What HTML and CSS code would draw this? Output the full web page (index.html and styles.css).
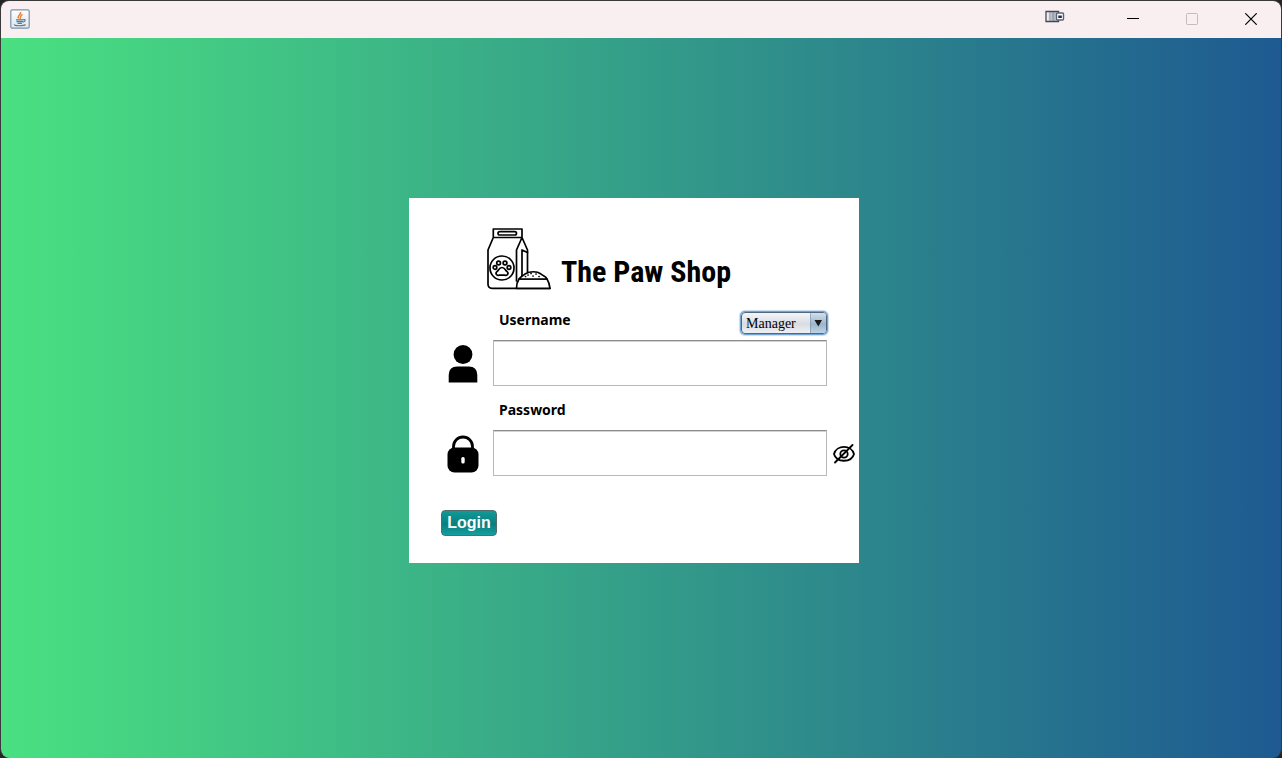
FILE: index.html
```html
<!DOCTYPE html>
<html lang="en">
<head>
<meta charset="utf-8">
<title>The Paw Shop</title>
<link rel="stylesheet" href="styles.css">
</head>
<body>
<div class="window">
  <header class="titlebar">
    <svg class="app-icon" width="20" height="20" viewBox="0 0 20 20" aria-hidden="true">
      <defs><linearGradient id="tile" x2="0" y2="1"><stop stop-color="#fff"/><stop offset="1" stop-color="#dde5ec"/></linearGradient></defs>
      <rect x=".8" y=".8" width="18.4" height="18.4" rx="1.5" fill="url(#tile)" stroke="#7c93a8" stroke-width="1.2"/>
      <path d="M10.5 3C11.5 5 7 6.200 8.500 9.500M12.500 5.500C9.500 6.500 11.500 8 10 10" fill="none" stroke="#e8853a" stroke-width="1.500"/>
      <path d="M6 10.800h7.500M6.500 12.600h6.500M7.500 14.300h4.500M13.500 10.500c2.500-.3 2 2-.4 2.600M4.500 15.300c-1.500 2 9.500 1.800 11 .2" fill="none" stroke="#577b9c" stroke-width="1.200"/>
    </svg>
    <div class="controls">
      <svg class="dock" width="20" height="14" viewBox="0 0 20 14" aria-hidden="true">
        <defs><linearGradient id="dock"><stop stop-color="#fff"/><stop offset=".6" stop-color="#a9adb6"/><stop offset="1" stop-color="#e8e9ed"/></linearGradient></defs>
        <path d="M1 2.500h12.500v10H1z" fill="url(#dock)" stroke="#41475a" stroke-width="1.300"/>
        <path d="M5 3v9M8 3v9" stroke="#8f94a1"/>
        <rect x="11.500" y="4" width="7" height="7" rx="1" fill="#fff" stroke="#596278" stroke-width="1.400"/>
        <path d="M13.300 6.500h3.500v2.500h-3.500z" fill="#252b3d"/>
      </svg>
      <button class="win-btn" aria-label="Minimize"><svg width="12" height="12" viewBox="0 0 12 12"><path d="M0 5.500h12" stroke="#000"/></svg></button>
      <button class="win-btn" aria-label="Maximize" disabled><svg width="12" height="12" viewBox="0 0 12 12"><rect x=".5" y=".5" width="11" height="11" rx="1" fill="none" stroke="#c3bcbd"/></svg></button>
      <button class="win-btn" aria-label="Close"><svg width="12" height="12" viewBox="0 0 12 12"><path d="M.3.300l11.400 11.400M11.700.300L.300 11.700" stroke="#000" stroke-width="1.200"/></svg></button>
    </div>
  </header>
  <main class="content">
    <form class="card">
      <div class="brand">
        <svg width="66" height="62" viewBox="0 0 66 62" fill="none" stroke="#000" stroke-width="1.700" stroke-linejoin="round" stroke-linecap="round" aria-hidden="true">
          <path d="M6.300 9.500V1h28.700v8.500zM6.300 9.500L1 22v34q0 4.300 4 4.300H63M35 9.500L40.500 22v25M35 9.500L29.500 22v31"/>
          <path d="M35 22l5.500 2.500M35 22v28"/>
          <rect x="11" y="3.600" width="18.500" height="3.400" rx="1.700"/>
          <circle cx="15" cy="40" r="12"/>
          <path d="M15 39.500c-3 0-3.500 3.200-5 4-2.300 2.300 0 4.300 2.500 3.700h5c2.500.6 4.800-1.400 2.500-3.700-1.500-.8-2-4-5-4z"/>
          <circle cx="11.600" cy="35" r="1.900"/><circle cx="18" cy="35" r="1.900"/><circle cx="8" cy="39.500" r="1.800"/><circle cx="22" cy="39.500" r="1.800"/>
          <path d="M29.500 60.300c0-4 1-7 2.500-9.300h28c1.500 2.300 2.500 5.300 3 9.300z" fill="#fff"/>
          <path d="M32 51c2-3 4-3 6-5 5-3 12-3 16 0 2 2 5 2 6 5z" fill="#fff"/>
          <path d="M41 47h.1M44 45.500h.1M46 48h.1M49 46h.1M52 48.500h.1M38.500 48.500h.1"/>
        </svg>
        <h1>The Paw Shop</h1>
      </div>
      <div class="label-row">
        <label for="username">Username</label>
        <span class="role">
          <select aria-label="Role"><option>Manager</option><option>Cashier</option></select>
          <svg class="role-arrow" width="16" height="20" viewBox="0 0 16 20" aria-hidden="true"><path d="M0 0v20" stroke="#6f889f"/><path d="M4.500 7h7.500l-3.700 6.500z" fill="#1a1a1a"/></svg>
        </span>
      </div>
      <div class="field-row">
        <svg class="field-icon" width="30" height="38" viewBox="0 0 30 38" aria-hidden="true"><circle cx="15" cy="9.500" r="9.400"/><path d="M.700 37.500V30q0-8.500 8.500-8.500h11.600q8.500 0 8.500 8.500v7.500z"/></svg>
        <input id="username" type="text">
      </div>
      <div class="label-row"><label for="password">Password</label></div>
      <div class="field-row">
        <svg class="field-icon" width="32" height="38" viewBox="0 0 32 38" aria-hidden="true"><path d="M6.500 15v-3.500a9.500 9.500 0 0 1 19 0V15" fill="none" stroke="#000" stroke-width="2.800"/><rect x=".5" y="12.500" width="31" height="25" rx="7"/><rect x="14.300" y="22" width="3.400" height="6.500" rx="1.500" fill="#fff"/></svg>
        <input id="password" type="password">
        <button class="reveal" type="button" aria-label="Show password"><svg width="22" height="20" viewBox="0 0 22 20" fill="none" stroke="#000" stroke-width="1.800" stroke-linecap="round"><path d="M1 10C3.500 .5 18.500 .5 21 10 18.500 19 3.500 19 1 10z"/><circle cx="11" cy="10" r="3.700"/><path d="M2 18.500L19.500 1"/></svg></button>
      </div>
      <button class="login" type="button">Login</button>
    </form>
  </main>
</div>
</body>
</html>
```
FILE: styles.css
```css
* { box-sizing: border-box; }
body { margin: 0; background: #242426; font-family: "Noto Sans", "Open Sans", sans-serif; }
button { padding: 0; border: 0; background: none; }
svg { display: block; flex: none; }

.window {
  display: flex;
  flex-direction: column;
  min-height: 100vh;
  border: solid #3a3a3a;
  border-width: 1px 1px 0;
  border-radius: 9px;
  overflow: hidden;
}
.titlebar {
  display: flex;
  justify-content: space-between;
  height: 37px;
  padding: 8px 1px 0 9px;
  background: #f9eff0;
}
.controls { display: flex; }
.dock { margin-right: 38px; }
.win-btn { display: flex; justify-content: center; width: 59px; height: 20px; padding-top: 4px; }

.content {
  display: flex;
  flex: 1;
  align-items: center;
  justify-content: center;
  padding: 0 14px 35px 0;
  background: linear-gradient(to right, #4ae081, #1e5a91);
}
.card {
  width: 450px;
  padding: 30px 0 27px;
  background: #fff;
}
.brand { display: flex; align-items: flex-end; gap: 8px; margin: 0 0 6px 78px; }
.brand h1 {
  margin: 0;
  font: bold 30px/36px "Agency FB", "Roboto Condensed", "Liberation Sans Narrow", "Liberation Sans", sans-serif;
  white-space: nowrap;
}
.label-row {
  display: flex;
  justify-content: space-between;
  height: 44px;
  padding: 14px 32px 0 90px;
}
.label-row label { font-size: 14px; font-weight: bold; line-height: 20px; }
.role { position: relative; width: 86px; height: 22px; margin-top: 2px; }
.role select {
  display: block;
  width: 100%;
  height: 100%;
  padding: 0 18px 0 4px;
  appearance: none;
  border: 1px solid #4f6985;
  border-radius: 4px;
  outline: 0;
  box-shadow: 0 0 0 1px #73a4d1, 0 0 1px 2px #c8dcef;
  background: linear-gradient(#f4f5f8, #d9dce2 55%, #eef0f4);
  color: #000;
  font: 14px "Liberation Serif", serif;
}
.role-arrow {
  position: absolute;
  top: 1px;
  right: 1px;
  border-radius: 0 3px 3px 0;
  background: linear-gradient(#d3dfeb, #9db5ca 55%, #bdd2e4);
  pointer-events: none;
}
.field-row { display: grid; grid-template-columns: 84px 1fr 32px; align-items: center; }
.field-icon { justify-self: center; margin: 2px 0 0 24px; }
.field-row input {
  width: 100%;
  height: 46px;
  padding: 0 8px;
  border: 1px solid #b8b8b8;
  border-top-color: #8c8c8c;
  outline: 0;
  box-shadow: inset 0 1px #d3d3d3;
  font-size: 14px;
}
.reveal { justify-self: center; margin: 2px 0 0 2px; }
.login {
  display: block;
  width: 56px;
  height: 26px;
  margin: 34px 0 0 32px;
  border: 1px solid #526d70;
  border-radius: 4px;
  background: linear-gradient(#109a98, #087f7f 55%, #149f9e);
  color: #fff;
  font: bold 16px "Liberation Sans", Arial, sans-serif;
}
```
